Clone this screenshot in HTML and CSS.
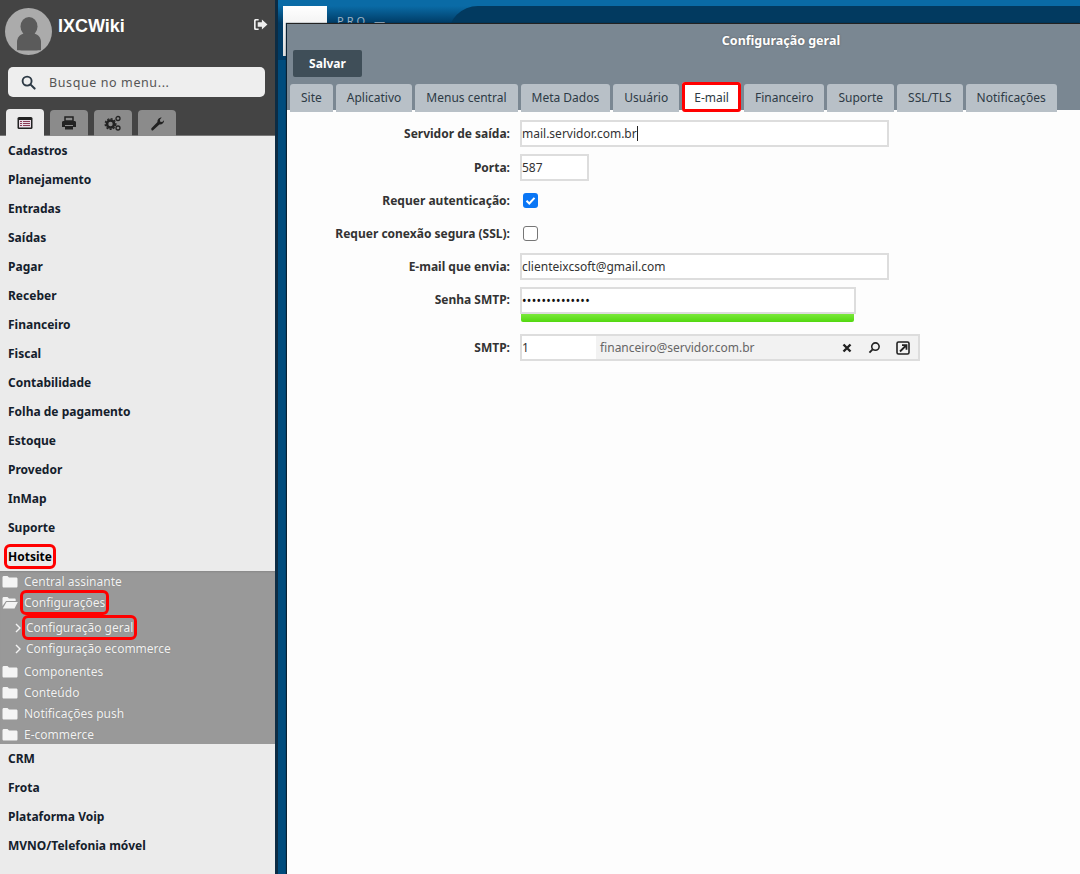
FILE: index.html
```html
<!DOCTYPE html>
<html lang="pt-BR">
<head>
<meta charset="utf-8">
<title>Configuração geral</title>
<link rel="stylesheet" href="styles.css">
</head>
<body>
<div class="app">
  <aside class="sidebar">
    <header class="side-head">
      <div class="user-row">
        <div class="avatar">
          <svg viewBox="0 0 47 47" width="47" height="47"><circle cx="23.5" cy="23.5" r="23.5" fill="#ababab"/><ellipse cx="24" cy="18.5" rx="8.5" ry="9.5" fill="#5b5b5b"/><path d="M12 42v-8c0-5 3.500-8 8-8.500h8c4.500.5 8 3.500 8 8.500v8c-2 .8-22 .8-24 0z" fill="#5b5b5b"/></svg>
        </div>
        <div class="user-name">IXCWiki</div>
        <svg class="logout" viewBox="0 0 16 14" width="15" height="13"><path d="M6 1H3C1.700 1 1 1.700 1 3v8c0 1.300.7 2 2 2h3v-1.800H3.500c-.4 0-.7-.3-.7-.7V3.500c0-.4.3-.7.7-.7H6z" fill="#eee"/><path d="M5 4.500h4.500V1.500L15.500 7l-6 5.500v-3H5z" fill="#eee"/></svg>
      </div>
      <div class="search">
        <svg viewBox="0 0 16 16" width="15" height="15"><circle cx="6.500" cy="6.500" r="4.800" fill="none" stroke="#2d3a45" stroke-width="2"/><path d="M10 10l4.500 4.500" stroke="#2d3a45" stroke-width="2.200" stroke-linecap="round"/></svg>
        <span class="search-text">Busque no menu...</span>
      </div>
      <nav class="side-tabs">
        <div class="side-tab active"><svg viewBox="0 0 16 14" width="16" height="14"><rect x=".5" y="1" width="15" height="12" rx="1.500" fill="#222"/><rect x="2" y="4" width="12" height="7.500" fill="#e9dce6"/><path d="M3 5.500h2M6 5.500h7M3 7.500h2M6 7.500h7M3 9.500h2M6 9.500h7" stroke="#8a3a55" stroke-width="1"/></svg></div>
        <div class="side-tab"><svg viewBox="0 0 16 14" width="16" height="14"><path d="M4 1h8v4H4z" fill="none" stroke="#222" stroke-width="1.500"/><path d="M1 6.500C1 5.500 1.700 5 2.500 5h11c.8 0 1.500.5 1.500 1.500V11h-3V9H4v2H1z" fill="#222"/><rect x="4" y="10" width="8" height="3.500" fill="#222"/></svg></div>
        <div class="side-tab"><svg viewBox="0 0 18 16" width="18" height="16"><circle cx="6.500" cy="9" r="3.500" fill="none" stroke="#222" stroke-width="2.600"/><circle cx="6.500" cy="9" r="5.300" fill="none" stroke="#222" stroke-width="1.400" stroke-dasharray="2 1.500"/><circle cx="14" cy="3.500" r="2" fill="none" stroke="#222" stroke-width="1.300"/><circle cx="14" cy="13" r="2" fill="none" stroke="#222" stroke-width="1.300"/></svg></div>
        <div class="side-tab"><svg viewBox="0 0 16 16" width="15" height="15"><path d="M1.500 13L8 6.500C7.500 4 9.500 1.500 12.500 1.500L10.500 4l.5 2 2 .5 2-2c.2 3-2.500 5-5 4.500L3 15.500c-1 .5-2.200-1.500-1.500-2.500z" fill="#222"/></svg></div>
      </nav>
    </header>
    <ul class="menu">
      <li class="menu-item">Cadastros</li>
      <li class="menu-item">Planejamento</li>
      <li class="menu-item">Entradas</li>
      <li class="menu-item">Saídas</li>
      <li class="menu-item">Pagar</li>
      <li class="menu-item">Receber</li>
      <li class="menu-item">Financeiro</li>
      <li class="menu-item">Fiscal</li>
      <li class="menu-item">Contabilidade</li>
      <li class="menu-item">Folha de pagamento</li>
      <li class="menu-item">Estoque</li>
      <li class="menu-item">Provedor</li>
      <li class="menu-item">InMap</li>
      <li class="menu-item">Suporte</li>
      <li class="menu-item"><span class="mark">Hotsite</span></li>
      <li class="submenu">
        <div class="folder"><svg class="fi" viewBox="0 0 16 13"><path d="M.5 2.500C.5 1.500 1 1 2 1h3.500L7 2.500h7c1 0 1.500.5 1.500 1.500v7c0 1-.5 1.500-1.500 1.500H2c-1 0-1.500-.5-1.500-1.500z" fill="#f4f4f4"/></svg><span>Central assinante</span></div>
        <div class="folder open"><svg class="fi" viewBox="0 0 16 13"><path d="M.5 2.500C.5 1.500 1 1 2 1h3.500L7 2.500h5.500c.8 0 1.200.5 1.200 1.200V5H4L.5 10z" fill="#f4f4f4"/><path d="M4.500 6H15.800L12.500 12.500H.8z" fill="#f4f4f4"/></svg><span class="mark">Configurações</span></div>
        <div class="leaf first"><svg class="chev" viewBox="0 0 6 10"><path d="M1 1l4 4-4 4" fill="none" stroke="#f4f4f4" stroke-width="1.400"/></svg><span class="mark">Configuração geral</span></div>
        <div class="leaf"><svg class="chev" viewBox="0 0 6 10"><path d="M1 1l4 4-4 4" fill="none" stroke="#f4f4f4" stroke-width="1.400"/></svg><span>Configuração ecommerce</span></div>
        <div class="folder after"><svg class="fi" viewBox="0 0 16 13"><path d="M.5 2.500C.5 1.500 1 1 2 1h3.500L7 2.500h7c1 0 1.500.5 1.500 1.500v7c0 1-.5 1.500-1.500 1.500H2c-1 0-1.500-.5-1.500-1.500z" fill="#f4f4f4"/></svg><span>Componentes</span></div>
        <div class="folder"><svg class="fi" viewBox="0 0 16 13"><path d="M.5 2.500C.5 1.500 1 1 2 1h3.500L7 2.500h7c1 0 1.500.5 1.500 1.500v7c0 1-.5 1.500-1.500 1.500H2c-1 0-1.500-.5-1.500-1.500z" fill="#f4f4f4"/></svg><span>Conteúdo</span></div>
        <div class="folder"><svg class="fi" viewBox="0 0 16 13"><path d="M.5 2.500C.5 1.500 1 1 2 1h3.500L7 2.500h7c1 0 1.500.5 1.500 1.500v7c0 1-.5 1.500-1.500 1.500H2c-1 0-1.500-.5-1.500-1.500z" fill="#f4f4f4"/></svg><span>Notificações push</span></div>
        <div class="folder"><svg class="fi" viewBox="0 0 16 13"><path d="M.5 2.500C.5 1.500 1 1 2 1h3.500L7 2.500h7c1 0 1.500.5 1.500 1.500v7c0 1-.5 1.500-1.500 1.500H2c-1 0-1.500-.5-1.500-1.500z" fill="#f4f4f4"/></svg><span>E-commerce</span></div>
      </li>
      <li class="menu-item">CRM</li>
      <li class="menu-item">Frota</li>
      <li class="menu-item">Plataforma Voip</li>
      <li class="menu-item">MVNO/Telefonia móvel</li>
    </ul>
  </aside>
  <main class="desktop">
    <div class="topbar">
      <div class="logo-box"></div>
      <div class="brand">PRO —</div>
      <div class="top-shape"></div>
    </div>
    <section class="window">
      <div class="win-head">
        <div class="win-title">Configuração geral</div>
        <button class="save">Salvar</button>
        <div class="tabs">
          <div class="tab">Site</div>
          <div class="tab">Aplicativo</div>
          <div class="tab">Menus central</div>
          <div class="tab">Meta Dados</div>
          <div class="tab">Usuário</div>
          <div class="tab current">E-mail</div>
          <div class="tab">Financeiro</div>
          <div class="tab">Suporte</div>
          <div class="tab">SSL/TLS</div>
          <div class="tab">Notificações</div>
        </div>
      </div>
      <form class="form">
        <div class="row r-server"><label class="lbl">Servidor de saída:</label><div class="field wide">mail.servidor.com.br<i class="caret"></i></div></div>
        <div class="row r-port"><label class="lbl">Porta:</label><div class="field short">587</div></div>
        <div class="row r-check1"><label class="lbl">Requer autenticação:</label><span class="check on"><svg viewBox="0 0 15 15" width="15" height="15"><path d="M3.500 7.800l2.800 2.700 5.200-5.700" fill="none" stroke="#fff" stroke-width="2"/></svg></span></div>
        <div class="row r-check2"><label class="lbl">Requer conexão segura (SSL):</label><span class="check"></span></div>
        <div class="row r-mail"><label class="lbl">E-mail que envia:</label><div class="field wide">clienteixcsoft@gmail.com</div></div>
        <div class="row r-pass"><label class="lbl">Senha SMTP:</label><div class="pass-wrap"><div class="field pass">••••••••••••••</div><div class="meter"></div></div></div>
        <div class="row r-smtp"><label class="lbl">SMTP:</label>
          <div class="lookup">
            <div class="lk-id">1</div>
            <div class="lk-text">financeiro@servidor.com.br</div>
            <svg class="lk-ic" viewBox="0 0 12 12" width="12" height="12"><path d="M2.500 2.500l7 7M9.500 2.500l-7 7" stroke="#222" stroke-width="2.400"/></svg>
            <svg class="lk-ic" viewBox="0 0 14 14" width="13" height="13"><circle cx="8" cy="6" r="4" fill="none" stroke="#222" stroke-width="1.700"/><path d="M5 9l-3.500 3.500" stroke="#222" stroke-width="2"/></svg>
            <svg class="lk-ic" viewBox="0 0 14 14" width="14" height="14"><rect x="1" y="1" width="12" height="12" rx="1.500" fill="none" stroke="#222" stroke-width="1.600"/><path d="M4 10.500L9.500 5M6 4.200h4.500v4.500" fill="none" stroke="#222" stroke-width="1.800"/></svg>
          </div>
        </div>
      </form>
    </section>
  </main>
</div>
</body>
</html>
```
FILE: styles.css
```css
* { box-sizing: border-box; }
html, body { margin: 0; padding: 0; height: 100%; overflow: hidden; }
body { font-family: "Noto Sans", "Open Sans", sans-serif; font-size: 12px; color: #333; }
.app { display: flex; width: 1080px; height: 874px; }

.sidebar { width: 275px; flex: none; background: #ebebeb; display: flex; flex-direction: column; }
.side-head { background: #444; height: 136px; padding: 8px 0 0; border-bottom: 1px solid #777; }
.user-row { display: flex; align-items: flex-start; height: 47px; padding-left: 5px; }
.avatar { width: 47px; height: 47px; }
.user-name { font-family: "Liberation Sans", Arial, sans-serif; font-weight: 700; font-size: 18px; color: #fff; margin: 8px 0 0 6px; line-height: 21px; }
.logout { margin: 10px 0 0 auto; margin-right: 7px; }
.search { display: flex; align-items: center; height: 30px; margin: 12px 10px 0 8px; padding-left: 13px; background: #eee; border-radius: 5px; }
.search-text { margin-left: 13px; font-size: 12.5px; letter-spacing: .6px; color: #555; }
.side-tabs { display: flex; gap: 6px; margin: 12px 0 0 6px; align-items: flex-end; height: 27px; }
.side-tab { width: 38px; height: 26px; background: #8b8b8b; border-radius: 4px 4px 0 0; display: flex; align-items: center; justify-content: center; }
.side-tab.active { background: #ebebeb; height: 27px; }

.menu { list-style: none; margin: 0; padding: 0; }
.menu-item { height: 29px; line-height: 29px; padding-left: 8px; font-weight: 700; font-size: 12px; color: #14202b; }
.mark { outline: 3px solid #f00; outline-offset: 1px; border-radius: 2px; }
.menu-item .mark { color: #000; padding: 0 0 0 0; }
.submenu { background: #999; height: 173px; padding-top: 0; color: #f2f2f2; box-shadow: inset 0 2px 2px -1px #888; }
.folder { display: flex; align-items: center; height: 21px; padding-left: 2px; }
.folder span, .leaf span { text-shadow: 0 0 1px #777; }
.fi { width: 16px; height: 13px; flex: none; margin-right: 6px; }
.leaf { display: flex; align-items: center; height: 21px; padding-left: 15px; }
.leaf.first { margin-top: 4px; }
.folder.after { margin-top: 2px; }
.chev { width: 6px; height: 10px; margin-right: 5px; }

.desktop { flex: 1; position: relative; background: #004c7d; border-left: 3px solid #0c2c44; }
.topbar { height: 60px; background: linear-gradient(#0a6ba6 0, #0a6ba6 6px, #003c66 23px); display: flex; }
.logo-box { width: 44px; height: 50px; margin: 6px 0 0 5px; background: linear-gradient(#fff, #ddd); }
.brand { color: #9db3c4; font-size: 11px; letter-spacing: 3px; margin: 13px 0 0 10px; }
.top-shape { flex: 1; margin: 6px 0 0 60px; background: #023a60; border-radius: 30px 0 0 0; }

.window { position: absolute; left: 9px; top: 23px; right: 0; bottom: 0; background: #fdfdfd; border-top: 1px solid #222; box-shadow: -1px 0 1px #0b2233; }
.win-head { height: 86px; background: #7a8792; position: relative; padding: 26px 0 0 6px; }
.win-title { position: absolute; left: 0; right: 0; top: 8px; text-align: center; font-weight: 700; font-size: 12.500px; color: #fff; text-shadow: 0 0 2px #555; padding-left: 195px; }
.save { display: block; width: 69px; height: 27px; border: 0; border-radius: 2px; background: #3f4e58; color: #fff; font: 700 12px "Noto Sans", sans-serif; }
.tabs { display: flex; gap: 3px; margin: 5px 0 0 -3px; align-items: flex-end; }
.tab { height: 28px; line-height: 28px; padding: 0 11px; background: #b8c0c7; border-radius: 3px 3px 0 0; color: #2d3a45; font-size: 12px; }
.tab.current { background: #fff; outline: 3px solid #f00; outline-offset: -3px; border-radius: 3px; height: 30px; line-height: 31px; padding: 0 12px; margin-bottom: 0; }

.form { padding-top: 10px; }
.row { display: flex; align-items: center; }
.lbl { width: 223px; text-align: right; font-weight: 700; font-size: 12px; color: #333; flex: none; margin-right: 10px; }
.field { height: 27px; border: 2px solid #ddd; background: #fff; line-height: 23px; padding-left: 0; font-size: 12px; color: #333; position: relative; }
.wide { width: 369px; }
.short { width: 69px; }
.pass { width: 336px; color: #111; letter-spacing: .35px; }
.caret { display: inline-block; width: 1px; height: 15px; background: #222; vertical-align: -3px; }
.r-port { margin-top: 7px; }
.r-check1 { margin-top: 12px; height: 15px; }
.r-check2 { margin-top: 18px; height: 15px; }
.r-mail { margin-top: 12px; }
.r-pass { margin-top: 7px; align-items: flex-start; }
.r-pass .lbl { line-height: 25px; }
.r-smtp { margin-top: 12px; }
.check { width: 15px; height: 15px; margin-left: 3px; border: 1.500px solid #767676; border-radius: 3px; background: #fff; display: block; }
.check.on { border: 0; background: #0a76f5; }
.check svg { display: block; }
.meter { height: 8px; width: 333px; margin-left: 1px; background: linear-gradient(#7ae83a, #52d80f); border-radius: 0 0 2px 2px; }
.lookup { width: 400px; height: 27px; display: flex; align-items: center; border: 2px solid #ddd; background: #f2f2f2; }
.lk-id { width: 74px; height: 23px; background: #fff; line-height: 23px; padding-left: 0; flex: none; }
.lk-text { flex: 1; padding-left: 4px; color: #666; }
.lk-ic { flex: none; margin-right: 15px; }
.lk-ic:last-child { margin-right: 8px; }
```
